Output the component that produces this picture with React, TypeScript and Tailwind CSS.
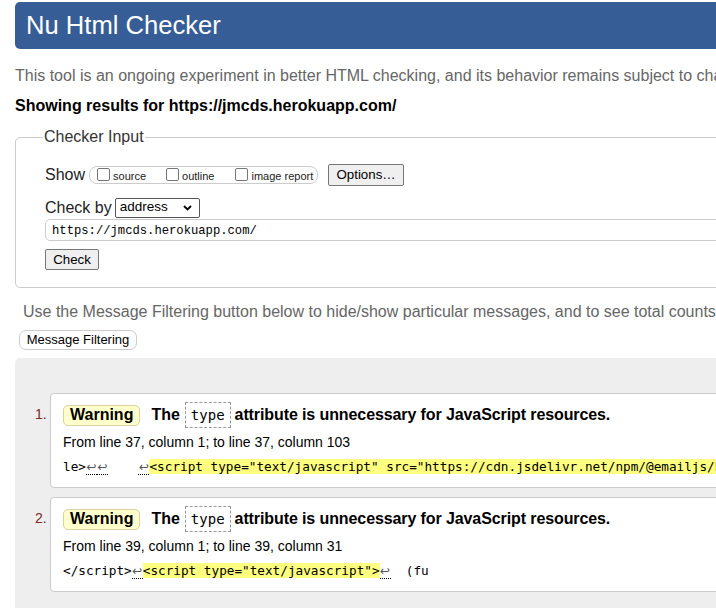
import React from 'react';

const sans = { fontFamily: '"Liberation Sans", Arial, sans-serif' };
const mono = '[font-family:"DejaVu_Sans_Mono",monospace]';

function Arrow({ underline = true }: { underline?: boolean }) {
  return (
    <span
      className={`inline-block w-[11px] text-center [font-family:"DejaVu_Sans",sans-serif] text-[12px] leading-[14px] text-[#555] ${
        underline ? 'border-b border-dotted border-black' : ''
      }`}
    >
      ↩
    </span>
  );
}

function Checkbox({ label }: { label: string }) {
  return (
    <span className="flex items-center">
      <span className="w-[13px] h-[13px] border border-[#767676] rounded-[2px] bg-white" />
      <span className="ml-[3px] text-[11px] text-[#222] leading-none pt-[3px]">{label}</span>
    </span>
  );
}

function Button({ children, className = '' }: { children: React.ReactNode; className?: string }) {
  return (
    <span
      className={`flex items-center justify-center bg-[#efefef] border border-[#767676] rounded-[2px] text-[13.3px] text-black ${className}`}
    >
      {children}
    </span>
  );
}

function Message({
  n,
  from,
  code,
}: {
  n: number;
  from: string;
  code: React.ReactNode;
}) {
  return (
    <div className="flex">
      <div className="w-[15px] shrink-0 text-right pr-[4px] mt-[12px] leading-[18px] text-[14px] text-[#7a2a20]">
        {n}.
      </div>
      <div className="flex-1 h-[95px] bg-white border border-[#cccccc] rounded-l-[4px] pl-[12px]">
        <div className="flex items-center h-[26px] mt-[8px] text-[16px] font-bold text-black">
          <span className="h-[21px] px-[6px] flex items-center bg-[#ffffcc] border border-[#d8d2a0] rounded-[5px]">
            Warning
          </span>
          <span className="ml-[11px]">The</span>
          <span
            className={`ml-[5px] h-[26px] px-[5px] flex items-center border border-dashed border-[#999] font-normal text-[14px] ${mono}`}
          >
            type
          </span>
          <span className="ml-[4px] tracking-[-0.1px]">attribute is unnecessary for JavaScript resources.</span>
        </div>
        <div className="mt-[5px] text-[14px] leading-[18px] text-black">{from}</div>
        <div className={`mt-[6px] text-[12.7px] leading-[20px] whitespace-pre text-black ${mono}`}>
          {code}
        </div>
      </div>
    </div>
  );
}

export default function App() {
  return (
    <div className="w-[716px] h-[608px] overflow-hidden bg-white" style={sans}>
      <div className="w-[1000px]">
        {/* header */}
        <div className="mt-[2px] ml-[15px] mr-[15px] h-[47px] bg-[#365d95] rounded-[5px] flex items-center pl-[11px]">
          <h1 className="text-[25.6px] text-white leading-none">Nu Html Checker</h1>
        </div>

        <p className="mt-[18px] ml-[15px] text-[16px] leading-[18px] text-[#666] whitespace-nowrap">
          This tool is an ongoing experiment in better HTML checking, and its behavior remains subject to change
        </p>
        <p className="mt-[12px] ml-[15px] text-[16px] leading-[18px] font-bold text-black whitespace-nowrap">
          Showing results for https://jmcds.herokuapp.com/
        </p>

        {/* checker input */}
        <fieldset className="mt-[13px] ml-[15px] mr-[15px] border border-[#cccccc] rounded-[5px] pl-[29px] pb-[17px]">
          <legend className="ml-[-2px] px-[1px] text-[16px] leading-[18px] text-[#333]">Checker Input</legend>

          <div className="mt-[17px] h-[23px] flex items-center">
            <span className="text-[16px] text-[#222]">Show</span>
            <span className="ml-[4px] h-[18px] w-[229px] border border-[#cccccc] rounded-[8px] flex items-center pl-[7px]">
              <Checkbox label="source" />
              <span className="w-[20px]" />
              <Checkbox label="outline" />
              <span className="w-[21px]" />
              <Checkbox label="image report" />
            </span>
            <Button className="ml-[10px] w-[76px] h-[22px]">Options…</Button>
          </div>

          <div className="mt-[11px] h-[21px] flex items-center">
            <span className="text-[16px] text-[#222]">Check by</span>
            <span className="ml-[3px] w-[85px] h-[20px] border border-[#555] rounded-[2px] bg-white flex items-center pl-[4px] pr-[7px] justify-between">
              <span className="text-[13.5px] text-black">address</span>
              <svg width="9" height="6" viewBox="0 0 9 6">
                <path d="M1 1 L4.5 4.5 L8 1" fill="none" stroke="#000" strokeWidth="1.8" />
              </svg>
            </span>
          </div>

          <div className="mt-[1px] h-[22px] border border-[#cccccc] rounded-[5px] flex items-center pl-[6px]">
            <span className="text-[12.2px] pt-[2px] [font-family:'Liberation_Mono',monospace] text-black">
              https://jmcds.herokuapp.com/
            </span>
          </div>

          <div className="mt-[8px] flex">
            <Button className="w-[54px] h-[21px]">Check</Button>
          </div>
        </fieldset>

        <p className="mt-[15px] ml-[23px] text-[16px] leading-[18px] text-[#666] whitespace-nowrap">
          Use the Message Filtering button below to hide/show particular messages, and to see total counts of errors and warnings.
        </p>
        <div className="mt-[9px] ml-[19px] flex">
          <span className="h-[20px] w-[118px] flex items-center justify-center border border-[#cccccc] rounded-[7px] bg-white text-[13px] text-black">
            Message Filtering
          </span>
        </div>

        {/* results */}
        <div className="mt-[8px] ml-[15px] h-[260px] bg-[#eeeeee] rounded-tl-[5px] pt-[35px] pl-[20px] flex flex-col gap-[9px]">
          <Message
            n={1}
            from="From line 37, column 1; to line 37, column 103"
            code={
              <>
                le&gt;<Arrow />
                <Arrow />
                {'    '}
                <Arrow />
                <span className="bg-[#ffff80]">
                  &lt;script type="text/javascript" src="https://cdn.jsdelivr.net/npm/@emailjs/browser@3/dist/email.min.js"&gt;
                </span>
              </>
            }
          />
          <Message
            n={2}
            from="From line 39, column 1; to line 39, column 31"
            code={
              <>
                &lt;/script&gt;<Arrow />
                <span className="bg-[#ffff80]">&lt;script type="text/javascript"&gt;</span>
                <Arrow />
                {'  '}(fu
              </>
            }
          />
        </div>
      </div>
    </div>
  );
}
